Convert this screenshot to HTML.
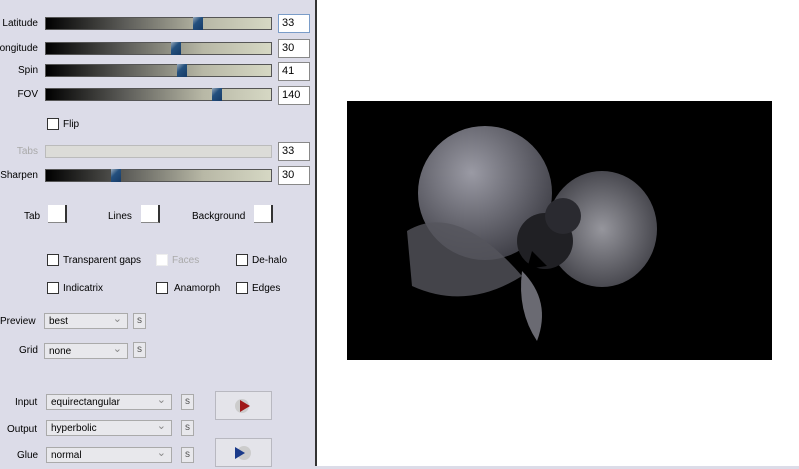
<!DOCTYPE html>
<html><head><style>
body{margin:0;width:799px;height:466px;overflow:hidden;background:#dcdce8;font-family:"Liberation Sans",sans-serif;font-size:10px;color:#000;position:relative}
.a{position:absolute}
.lbl{position:absolute;text-align:right;width:38px;left:0}
.sl{position:absolute;left:45px;width:225px;height:11px;border:1px solid #555;background:linear-gradient(90deg,#000,#5c5c58 35%,#b8b8a6 70%,#d6d8c4)}
.th{position:absolute;top:-1px;width:10px;height:13px;background:linear-gradient(135deg,#9ab 0,#24507e 40%,#163a66)}
.tx{position:absolute;left:278px;width:27px;height:17px;border:1px solid #888;background:#fff;font-size:11px;line-height:17px;padding-left:3px}
.cb{position:absolute;width:10px;height:10px;border:1px solid #333;background:#fff}
.sw{position:absolute;width:17px;height:17px;background:#fff;border-right:2px solid #333;border-bottom:1px solid #888}
.sel{position:absolute;height:16px;border:1px solid #aaa;background:#e8e8ec;font-size:10px;line-height:16px;padding-left:4px;box-sizing:border-box}
.sel:after{content:"⌄";position:absolute;right:5px;top:-3px;color:#888;font-size:11px}
.s{position:absolute;width:11px;height:14px;border:1px solid #aaa;background:#e8e8ec;font-size:10px;text-align:center;line-height:13px;color:#555}
.btn{position:absolute;width:55px;height:27px;border:1px solid #b8b8c0;background:#e4e4ea}
</style></head><body>
<div class="lbl" style="top:18px">Latitude</div>
<div class="lbl" style="top:43px;left:-8px;width:46px;overflow:hidden;direction:rtl">Longitude</div>
<div class="lbl" style="top:65px">Spin</div>
<div class="lbl" style="top:89px">FOV</div>
<div class="lbl" style="top:146px;color:#aaa">Tabs</div>
<div class="lbl" style="top:170px;left:-4px;width:42px">Sharpen</div>
<div class="sl" style="top:17px"><div class="th" style="left:147px"></div></div>
<div class="sl" style="top:42px"><div class="th" style="left:125px"></div></div>
<div class="sl" style="top:64px"><div class="th" style="left:131px"></div></div>
<div class="sl" style="top:88px"><div class="th" style="left:166px"></div></div>
<div class="sl" style="top:145px;background:#dcdcd8;border-color:#bbb"></div>
<div class="sl" style="top:169px"><div class="th" style="left:65px"></div></div>
<div class="tx" style="top:14px;border-color:#7a9cc8">33</div>
<div class="tx" style="top:39px">30</div>
<div class="tx" style="top:62px">41</div>
<div class="tx" style="top:86px">140</div>
<div class="tx" style="top:142px">33</div>
<div class="tx" style="top:166px">30</div>
<div class="cb" style="left:47px;top:118px"></div><div class="a" style="left:63px;top:119px">Flip</div>
<div class="a" style="left:24px;top:211px">Tab</div><div class="sw" style="left:48px;top:205px"></div>
<div class="a" style="left:108px;top:211px">Lines</div><div class="sw" style="left:141px;top:205px"></div>
<div class="a" style="left:192px;top:211px">Background</div><div class="sw" style="left:254px;top:205px"></div>
<div class="cb" style="left:47px;top:254px"></div><div class="a" style="left:63px;top:255px">Transparent gaps</div>
<div class="cb" style="left:156px;top:254px;border-color:#eee"></div><div class="a" style="left:172px;top:255px;color:#aaa">Faces</div>
<div class="cb" style="left:236px;top:254px"></div><div class="a" style="left:252px;top:255px">De-halo</div>
<div class="cb" style="left:47px;top:282px"></div><div class="a" style="left:63px;top:283px">Indicatrix</div>
<div class="cb" style="left:156px;top:282px"></div><div class="a" style="left:174px;top:283px">Anamorph</div>
<div class="cb" style="left:236px;top:282px"></div><div class="a" style="left:252px;top:283px">Edges</div>
<div class="a" style="left:0;top:316px">Preview</div><div class="sel" style="left:44px;top:313px;width:84px">best</div><div class="s" style="left:133px;top:313px">s</div>
<div class="a" style="left:19px;top:345px">Grid</div><div class="sel" style="left:44px;top:343px;width:84px">none</div><div class="s" style="left:133px;top:342px">s</div>
<div class="a" style="left:15px;top:397px">Input</div><div class="sel" style="left:46px;top:394px;width:126px">equirectangular</div><div class="s" style="left:181px;top:394px">s</div>
<div class="a" style="left:7px;top:424px">Output</div><div class="sel" style="left:46px;top:420px;width:126px">hyperbolic</div><div class="s" style="left:181px;top:420px">s</div>
<div class="a" style="left:17px;top:450px">Glue</div><div class="sel" style="left:46px;top:447px;width:126px">normal</div><div class="s" style="left:181px;top:447px">s</div>
<div class="btn" style="left:215px;top:391px"><svg width="55" height="27"><circle cx="26" cy="14" r="7" fill="#ccc"/><path d="M24 8 L34 14 L24 20Z" fill="#a01818"/></svg></div>
<div class="btn" style="left:215px;top:438px"><svg width="55" height="27"><circle cx="28" cy="14" r="7" fill="#ccc"/><path d="M19 8 L29 14 L19 20Z" fill="#1a3a8a"/></svg></div>
<div class="a" style="left:315px;top:0;width:2px;height:466px;background:#333"></div>
<div class="a" style="left:317px;top:0;width:482px;height:466px;background:#fff"></div>
<div class="a" style="left:347px;top:101px;width:425px;height:259px;background:#000">
<svg width="425" height="259">
<defs>
<radialGradient id="g1" cx="40%" cy="35%" r="70%"><stop offset="0" stop-color="#9a9aa4"/><stop offset="1" stop-color="#3c3c44"/></radialGradient>
<radialGradient id="g2" cx="50%" cy="50%" r="60%"><stop offset="0" stop-color="#b0b0b8"/><stop offset="1" stop-color="#44444c"/></radialGradient>
</defs>
<circle cx="138" cy="92" r="67" fill="url(#g1)"/>
<ellipse cx="255" cy="128" rx="55" ry="58" fill="url(#g2)" opacity=".85"/>
<path d="M60 130 Q110 100 175 175 Q120 210 65 185Z" fill="#55555c" opacity=".8"/>
<path d="M175 170 Q205 200 190 240 Q170 210 175 170Z" fill="#6a6a72"/>
<circle cx="198" cy="140" r="28" fill="#202024"/>
<circle cx="216" cy="115" r="18" fill="#2a2a30"/>
<path d="M185 150 L200 165 L180 168Z" fill="#000"/>
</svg></div>
</body></html>
